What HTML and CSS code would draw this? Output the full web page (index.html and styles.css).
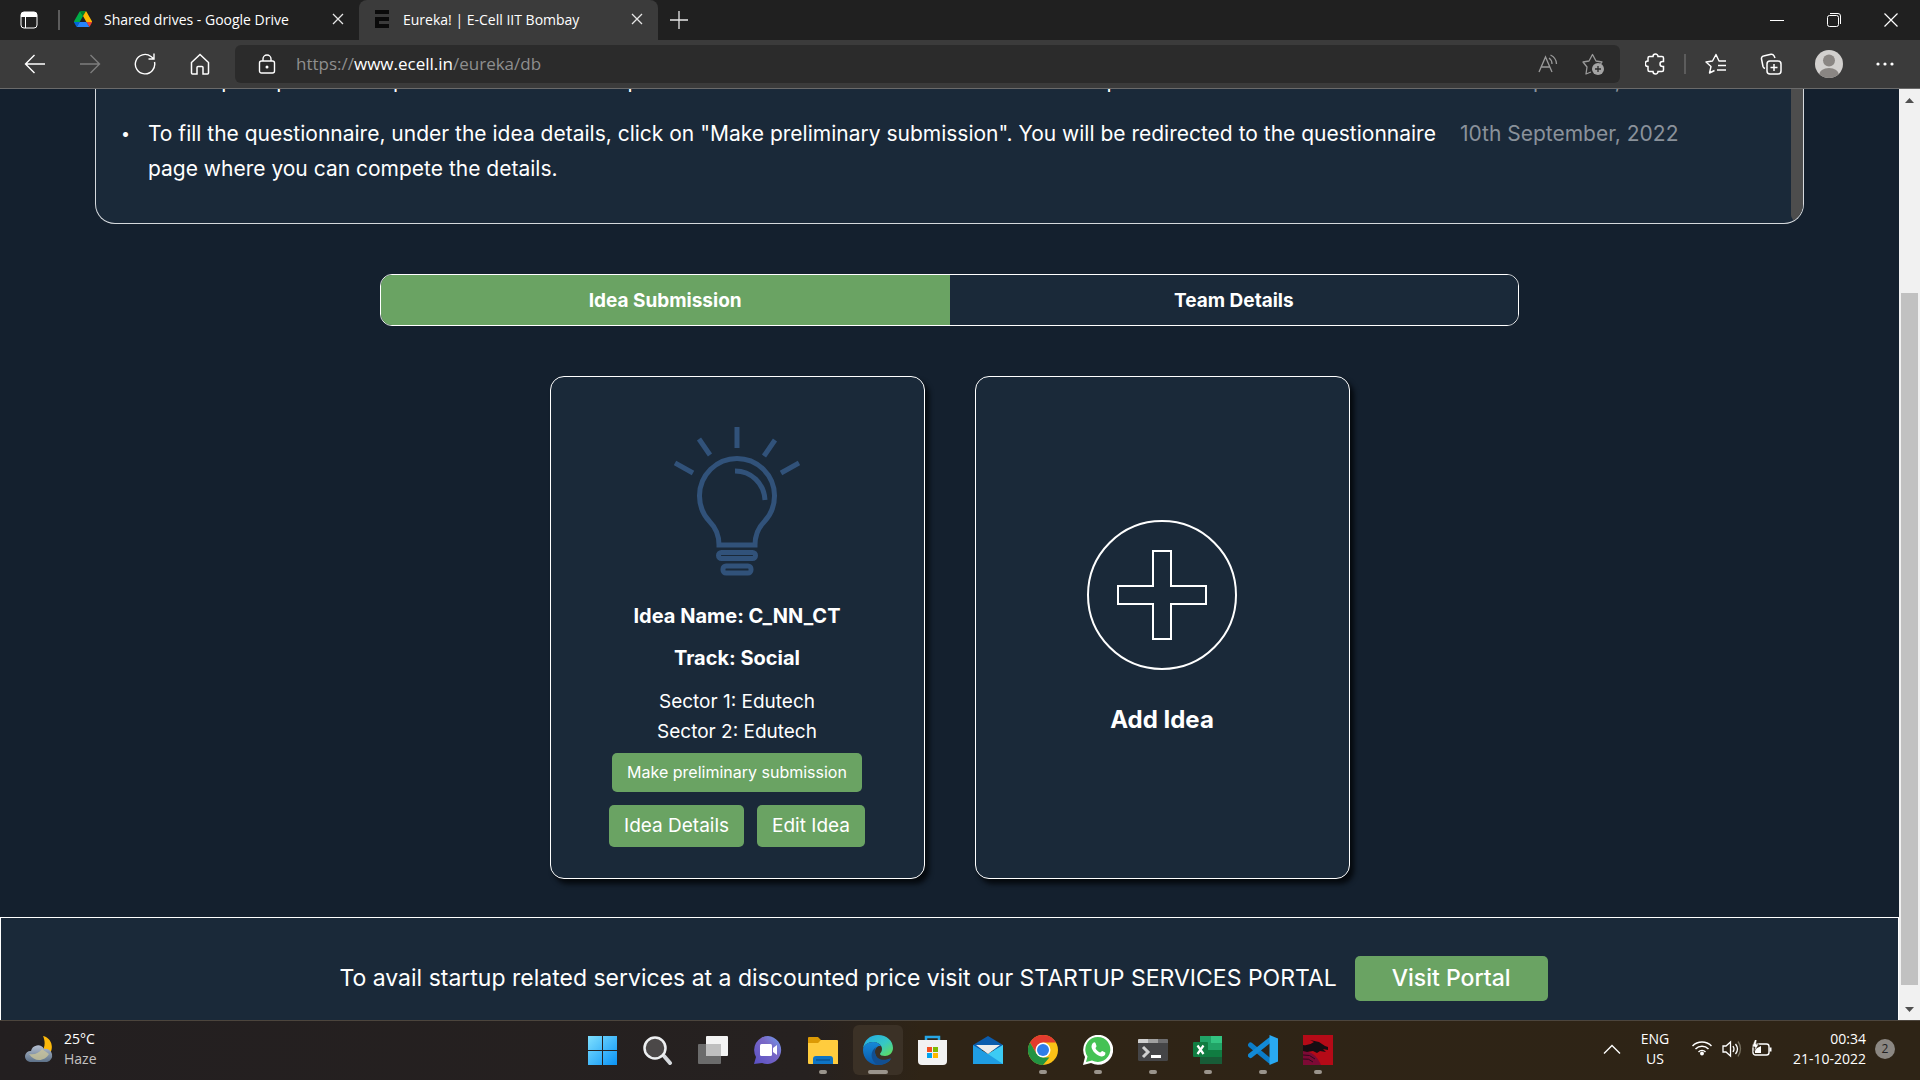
FILE: index.html
```html
<!DOCTYPE html>
<html lang="en">
<head>
<meta charset="utf-8">
<title>Eureka! | E-Cell IIT Bombay</title>
<link rel="stylesheet" href="styles.css">
</head>
<body>
<header class="browser">
  <div class="tabstrip">
    <button class="icon-btn workspaces" aria-label="Tab actions"><svg width="18" height="18" viewBox="0 0 18 18"><rect x="1" y="1" width="16" height="16" rx="3" fill="none" stroke="#fff" stroke-width="1"/><path d="M1 6V4a3 3 0 0 1 3-3h10a3 3 0 0 1 3 3v2z" fill="#fff"/><path d="M5.500 6v11" stroke="#fff"/></svg></button>
    <span class="divider"></span>
    <div class="tab">
      <svg width="18" height="18" viewBox="0 0 87 78"><path d="M6.600 66.850l3.850 6.650c.8 1.400 1.950 2.500 3.300 3.300L27.500 53H0c0 1.550.4 3.100 1.200 4.500z" fill="#0066da"/><path d="M43.650 25L29.900 1.200c-1.350.8-2.500 1.900-3.300 3.300l-25.400 44A9 9 0 0 0 0 53h27.500z" fill="#00ac47"/><path d="M73.550 76.800c1.350-.8 2.500-1.900 3.300-3.300l9.250-16c.8-1.400 1.200-2.950 1.200-4.500H59.800l5.850 11.500z" fill="#ea4335"/><path d="M43.650 25L57.400 1.200C56.050.4 54.500 0 52.900 0H34.400c-1.600 0-3.150.45-4.500 1.200z" fill="#00832d"/><path d="M59.800 53H27.500L13.750 76.800c1.350.8 2.900 1.200 4.500 1.200h50.800c1.600 0 3.150-.45 4.500-1.200z" fill="#2684fc"/><path d="M73.400 26.500l-12.700-22c-.8-1.400-1.950-2.500-3.300-3.300L43.650 25 59.800 53h27.450c0-1.550-.4-3.100-1.200-4.500z" fill="#ffba00"/></svg>
      <span class="tab-title">Shared drives - Google Drive</span>
      <button class="icon-btn" aria-label="Close tab"><svg width="12" height="12" viewBox="0 0 12 12"><path d="M1 1l10 10M11 1L1 11" stroke="#e6e6e6" stroke-width="1.300"/></svg></button>
    </div>
    <div class="tab active">
      <svg width="18" height="18" viewBox="0 0 18 18"><path d="M2 0h14v4H2zM2 7h14v4H6v3h10v4H2z" fill="#0a0a0a"/></svg>
      <span class="tab-title">Eureka! | E-Cell IIT Bombay</span>
      <button class="icon-btn" aria-label="Close tab"><svg width="12" height="12" viewBox="0 0 12 12"><path d="M1 1l10 10M11 1L1 11" stroke="#e6e6e6" stroke-width="1.300"/></svg></button>
    </div>
    <button class="icon-btn new-tab" aria-label="New tab"><svg width="18" height="18" viewBox="0 0 18 18"><path d="M9 0v18M0 9h18" stroke="#e6e6e6" stroke-width="1.300"/></svg></button>
    <div class="window-controls">
      <button class="icon-btn" aria-label="Minimize"><svg width="14" height="14" viewBox="0 0 14 14"><path d="M0 7.500h14" stroke="#fff"/></svg></button>
      <button class="icon-btn" aria-label="Restore"><svg width="14" height="14" viewBox="0 0 14 14" fill="none" stroke="#fff"><rect x=".5" y="2.500" width="11" height="11" rx="2"/><path d="M3 .5h8a2.500 2.500 0 0 1 2.500 2.500v8"/></svg></button>
      <button class="icon-btn" aria-label="Close"><svg width="14" height="14" viewBox="0 0 14 14"><path d="M.5.5l13 13M13.500.5l-13 13" stroke="#fff" stroke-width="1.200"/></svg></button>
    </div>
  </div>
  <div class="toolbar">
    <button class="icon-btn nav" aria-label="Back"><svg width="22" height="22" viewBox="0 0 22 22" fill="none" stroke="#fff" stroke-width="1.400"><path d="M21 11H1.500M10.500 2l-9 9 9 9"/></svg></button>
    <button class="icon-btn nav" aria-label="Forward"><svg width="22" height="22" viewBox="0 0 22 22" fill="none" stroke="#7d7d7d" stroke-width="1.400"><path d="M1 11h19.500M11.500 2l9 9-9 9"/></svg></button>
    <button class="icon-btn nav" aria-label="Refresh"><svg width="22" height="22" viewBox="0 0 22 22" fill="none" stroke="#fff" stroke-width="1.400"><path d="M20.500 9A9.700 9.700 0 1 1 17 3.500l2.500 2M20 .5v5.500h-5.500"/></svg></button>
    <button class="icon-btn nav" aria-label="Home"><svg width="22" height="22" viewBox="0 0 22 22" fill="none" stroke="#fff" stroke-width="1.500"><path d="M2.500 9.500L11 1.500l8.500 8V20a1 1 0 0 1-1 1H14v-6.500a1 1 0 0 0-1-1H9a1 1 0 0 0-1 1V21H3.500a1 1 0 0 1-1-1z"/></svg></button>
    <div class="address">
      <svg width="18" height="20" viewBox="0 0 18 20" fill="none" stroke="#fff" stroke-width="1.400"><rect x="1.500" y="7" width="15" height="12" rx="2"/><path d="M5 7V5a4 4 0 0 1 8 0v2"/><circle cx="9" cy="13" r=".8" fill="#fff"/></svg>
      <a class="url" href="#">https://<span class="host">www.ecell.in</span>/eureka/db</a>
      <button class="icon-btn" aria-label="Read aloud"><svg width="20" height="20" viewBox="0 0 20 20" fill="none" stroke="#9a9a9a" stroke-width="1.300"><path d="M1 18L7.500 3 14 18M3.500 13h8M11 4q3 2 3 6M12.500 1q6 3 6 9"/></svg></button>
      <button class="icon-btn" aria-label="Add to favorites"><svg width="22" height="22" viewBox="0 0 22 22"><path d="M9 19l-5 2 1-7-4-5 6-1 3.500-6.500L14 8l6 1-2 3" fill="none" stroke="#9a9a9a" stroke-width="1.300" stroke-linejoin="round"/><circle cx="16" cy="16" r="6" fill="#a4a4a4"/><path d="M16 13v6M13 16h6" stroke="#2b2b2b" stroke-width="1.300"/></svg></button>
    </div>
    <div class="tools">
      <button class="icon-btn" aria-label="Extensions"><svg width="20" height="22" viewBox="0 0 20 22" fill="none" stroke="#fff" stroke-width="1.500"><path d="M3 8V5a1.500 1.500 0 0 1 1.500-1.500H8a2.500 2.500 0 0 1 5 0h4A1.500 1.500 0 0 1 18.500 5v3.500h-1a2.500 2.500 0 0 0 0 5h1V17a1.500 1.500 0 0 1-1.500 1.500h-4a2.500 2.500 0 0 1-5 0H4.500A1.500 1.500 0 0 1 3 17v-3.500A2.700 2.700 0 0 1 3 8z"/></svg></button>
      <span class="divider"></span>
      <button class="icon-btn" aria-label="Favorites"><svg width="22" height="22" viewBox="0 0 22 22" fill="none" stroke="#fff" stroke-width="1.400" stroke-linejoin="round"><path d="M21 8h-7l-3-6.500L7.500 8 1 9l5 4.500L4.500 20l5-2.500M13 12.500h8M12 17h9"/></svg></button>
      <button class="icon-btn" aria-label="Collections"><svg width="22" height="22" viewBox="0 0 22 22" fill="none" stroke="#fff" stroke-width="1.500"><rect x="7" y="8" width="14" height="13" rx="3"/><path d="M14 11v7M10.500 14.500h7M5 15.500a3 3 0 0 1-2-2L1.500 6a2.500 2.500 0 0 1 2-3L11 1.200a3 3 0 0 1 3 1.600L15 5"/></svg></button>
      <button class="icon-btn" aria-label="Profile"><svg width="28" height="28" viewBox="0 0 28 28"><defs><clipPath id="avatar"><circle cx="14" cy="14" r="14"/></clipPath></defs><g clip-path="url(#avatar)"><path d="M0 0h28v28H0z" fill="#d2d0ce"/><circle cx="14" cy="10.500" r="6" fill="#8a8683"/><ellipse cx="14" cy="25" rx="10" ry="7" fill="#8a8683"/></g></svg></button>
      <button class="icon-btn" aria-label="Settings and more"><svg width="18" height="4" viewBox="0 0 18 4" fill="#fff"><circle cx="2" cy="2" r="1.600"/><circle cx="9" cy="2" r="1.600"/><circle cx="16" cy="2" r="1.600"/></svg></button>
    </div>
  </div>
</header>

<div class="viewport">
  <main class="page">
    <section class="notices">
      <ul class="notice-list">
        <li><p>To complete profile with photo and the idea info please click on the button that is shown at the top</p><time>10th September, 2022</time></li>
        <li><p>To fill the questionnaire, under the idea details, click on "Make preliminary submission". You will be redirected to the questionnaire page where you can compete the details.</p><time>10th September, 2022</time></li>
      </ul>
      <div class="notice-thumb"></div>
    </section>
    <nav class="switcher">
      <button class="switch selected">Idea Submission</button>
      <button class="switch">Team Details</button>
    </nav>
    <section class="cards">
      <article class="card idea">
        <svg class="bulb" width="126" height="150" viewBox="0 0 126 150" fill="none" stroke="#31527a" stroke-width="5"><path d="M63 0v21M25 12l11 16M101 13L90 29M1 36l18 10M125 36l-18 10"/><g transform="translate(0 2)"><path d="M45 116c0-9-3-17-9-23a37.500 37.500 0 1 1 54 0c-6 6-9 14-9 23z"/><path d="M61 42c16 0 29 12 30 29"/><rect x="44.500" y="123.500" width="37" height="6" rx="3"/><rect x="49" y="137" width="28" height="7" rx="3"/></g></svg>
        <h3>Idea Name: C_NN_CT</h3>
        <h3>Track: Social</h3>
        <p>Sector 1: Edutech</p>
        <p>Sector 2: Edutech</p>
        <button class="btn small">Make preliminary submission</button>
        <div class="btn-row"><button class="btn">Idea Details</button><button class="btn">Edit Idea</button></div>
      </article>
      <article class="card add">
        <svg width="150" height="150" viewBox="0 0 150 150" fill="none" stroke="#fff" stroke-width="2"><circle cx="75" cy="75" r="74"/><path d="M66 31h18v35h35v18H84v35H66V84H31V66h35z"/></svg>
        <h2>Add Idea</h2>
      </article>
    </section>
    <footer class="portal">
      <p>To avail startup related services at a discounted price visit our STARTUP SERVICES PORTAL</p>
      <button class="btn large">Visit Portal</button>
    </footer>
  </main>
  <div class="scrollbar">
    <svg width="9" height="5" viewBox="0 0 9 5"><path d="M0 5l4.500-5L9 5z" fill="#505050"/></svg>
    <div class="track"><div class="thumb"></div></div>
    <svg width="9" height="5" viewBox="0 0 9 5"><path d="M0 0l4.500 5L9 0z" fill="#505050"/></svg>
  </div>
</div>

<footer class="taskbar">
  <div class="weather">
    <svg width="30" height="28" viewBox="0 0 30 28"><defs><linearGradient id="cloud" x1="0" y1="0" x2="0" y2="1"><stop offset="0" stop-color="#b4bfd0"/><stop offset="1" stop-color="#5d7188"/></linearGradient></defs><path d="M19 1c9 2 12 13 5 20-5 5-14 5-19-1 12 3 19-8 14-19z" fill="#fdb90b"/><path d="M6 27a5.500 5.500 0 0 1 1-11 7 7 0 0 1 13-2 6.500 6.500 0 1 1 3 13z" fill="url(#cloud)"/><path d="M5 19c6 1 10-1 13-5l7 5c-4 7-14 9-20 0z" fill="#c9c39a" opacity=".8"/></svg>
    <div><div class="temp">25°C</div><div class="cond">Haze</div></div>
  </div>
  <div class="apps">
    <button class="app" aria-label="Start"><svg width="30" height="30" viewBox="0 0 30 30"><defs><linearGradient id="win" x1="0" y1="0" x2="1" y2="1"><stop offset="0" stop-color="#7fe0ff"/><stop offset="1" stop-color="#0a93f5"/></linearGradient></defs><path d="M0 1h14v14H0zM15 1h14v14H15zM0 16h14v14H0zM15 16h14v14H15z" fill="url(#win)"/></svg></button>
    <button class="app" aria-label="Search"><svg width="30" height="30" viewBox="0 0 30 30"><path d="M21 21l6 7" stroke="#d5d8dc" stroke-width="4" stroke-linecap="round"/><circle cx="12" cy="13" r="10.500" fill="#4b4848" stroke="#eef0f2" stroke-width="2.500"/></svg></button>
    <button class="app" aria-label="Task view"><svg width="30" height="30" viewBox="0 0 30 30"><rect x="8" y="1" width="22" height="20" rx="1" fill="#f3f3f3"/><rect y="9" width="23" height="20" rx="1" fill="#6b6b6b"/><path d="M8 9h15v12H8z" fill="#bfbfbf"/></svg></button>
    <button class="app" aria-label="Chat"><svg width="30" height="30" viewBox="0 0 30 30"><defs><linearGradient id="chat" x1="0" y1="1" x2="1" y2="0"><stop offset="0" stop-color="#5950c4"/><stop offset=".6" stop-color="#7a68c6"/><stop offset="1" stop-color="#6fa0f0"/></linearGradient></defs><path d="M15 1a14 14 0 1 1-6 27l-8 1 2-7A14 14 0 0 1 15 1z" fill="url(#chat)"/><rect x="7" y="9" width="12" height="12" rx="1.500" fill="#fff"/><path d="M20 13l4-3v10l-4-3z" fill="#fff"/></svg></button>
    <button class="app running" aria-label="File Explorer"><svg width="30" height="30" viewBox="0 0 30 30"><path d="M0 3a1 1 0 0 1 1-1h9l3 3h4v5H0z" fill="#dc9a05"/><path d="M0 8h10l3-3h16a1 1 0 0 1 1 1v23H1a1 1 0 0 1-1-1z" fill="#ffcc3e"/><path d="M5 29v-5a3 3 0 0 1 3-3h14a3 3 0 0 1 3 3v5z" fill="#0e74c4"/><path d="M8 25h14" stroke="#06457c"/></svg></button>
    <button class="app running current" aria-label="Microsoft Edge"><svg width="30" height="30" viewBox="0 0 30 30"><defs><linearGradient id="edgeTop" x1="0" y1="0" x2="1" y2="1"><stop offset="0" stop-color="#21a8e8"/><stop offset=".55" stop-color="#36c8c4"/><stop offset="1" stop-color="#66df4e"/></linearGradient><linearGradient id="edgeBody" x1="0" y1="0" x2="0" y2="1"><stop offset="0" stop-color="#1589d8"/><stop offset="1" stop-color="#0b58a8"/></linearGradient></defs><path d="M0 14C1 5 7 0 15 0c9 0 15 6 15 13 0 5-4 8-8 8-3 0-5-1-5-2s2-2 2-5c0-4-4-7-9-7-5 0-9 3-10 7z" fill="url(#edgeTop)"/><path d="M0 15c0-5 5-8 10-8 4 0 7 2 8.500 4.500C15 10 12 13 12 17c0 5 4 9 9 9 3 0 5-1 7-2-3 4-8 6-13 6C6 30 0 23 0 15z" fill="url(#edgeBody)"/><path d="M13 12c-4 3-5 7-4 11 1 3 3 6 6 7 5 0 10-2 13-7-8 4-16 1-16-6 0-2 0-4 1-5z" fill="#124f91"/></svg></button>
    <button class="app" aria-label="Microsoft Store"><svg width="30" height="30" viewBox="0 0 30 30"><path d="M8 7V2h13v5" fill="none" stroke="#27a6e6" stroke-width="2.500"/><path d="M0 5h29v21a4 4 0 0 1-4 4H4a4 4 0 0 1-4-4z" fill="#f2f2f2"/><path d="M9 12h5v5H9z" fill="#f25022"/><path d="M15 12h5v5h-5z" fill="#7fba00"/><path d="M9 18h5v5H9z" fill="#00a4ef"/><path d="M15 18h5v5h-5z" fill="#ffb900"/></svg></button>
    <button class="app" aria-label="Mail"><svg width="30" height="30" viewBox="0 0 30 30"><path d="M0 10l15-9 15 9v5H0z" fill="#0b5cad"/><path d="M0 10l15 9 15-9v19H0z" fill="#1f9de3"/><path d="M15 19l15-9v19z" fill="#3ccbf4"/><path d="M3 10h24L15 19z" fill="#ececec"/></svg></button>
    <button class="app running" aria-label="Google Chrome"><svg width="30" height="30" viewBox="0 0 30 30"><circle cx="15" cy="15" r="15" fill="#fbc116"/><path d="M2 7.500A15 15 0 0 1 28 7.500H15L8.500 18.700z" fill="#e33b2e"/><path d="M2 7.500l6.500 11.200L15 22.500h6.400L15 30A15 15 0 0 1 2 7.500z" fill="#229342"/><circle cx="15" cy="15" r="7.500" fill="#fff"/><circle cx="15" cy="15" r="6" fill="#2f7de9"/></svg></button>
    <button class="app running" aria-label="WhatsApp"><svg width="30" height="30" viewBox="0 0 30 30"><path d="M0 30l2-8A15 15 0 1 1 8 28z" fill="#fff"/><path d="M3 27l1.500-5.500A12.500 12.500 0 1 1 9 25.500z" fill="#45c254"/><path d="M10 8c1-1 2-1 2.500 0l1 3c0 1-1 1.500-1 2.200 1 2 2.500 3.300 4.500 4.300 1 0 1.500-1.500 2.300-1.500l3 1.500c.5 3-2 4-4 4C14 21 9 16 8.500 12c0-2 .5-3 1.500-4z" fill="#fff"/></svg></button>
    <button class="app running" aria-label="Terminal"><svg width="30" height="30" viewBox="0 0 30 30"><rect y="4" width="30" height="22" rx="1.500" fill="#454547"/><path d="M0 8V5a1 1 0 0 1 1-1h9v4z" fill="#cfcfcf"/><path d="M10 4h10v4H10z" fill="#a0a0a0"/><path d="M20 4h9a1 1 0 0 1 1 1v3H20z" fill="#6d6d6f"/><path d="M5 12l5 5-5 5" fill="none" stroke="#d0d0d0" stroke-width="3"/><path d="M13 21.500h10" stroke="#fff" stroke-width="3"/></svg></button>
    <button class="app running" aria-label="Excel"><svg width="30" height="30" viewBox="0 0 30 30"><path d="M7 1h22v28H7z" fill="#185c37"/><path d="M7 1h11v14H7z" fill="#21a366"/><path d="M18 1h11v7H18z" fill="#33c481"/><path d="M18 8h11v7H18z" fill="#21a366"/><path d="M7 15h11v7H7z" fill="#107c41"/><path d="M18 15h11v7H18z" fill="#107c41"/><rect y="7" width="15" height="15" rx="1" fill="#107c41"/><path d="M4.500 10.500l6 8.500M10.500 10.500l-6 8.500" stroke="#fff" stroke-width="2.200"/></svg></button>
    <button class="app running" aria-label="Visual Studio Code"><svg width="30" height="30" viewBox="0 0 30 30"><path d="M2.500 10L22 26" stroke="#0b7cc8" stroke-width="5" stroke-linecap="round"/><path d="M2.500 20.500L22 5" stroke="#128ad6" stroke-width="5" stroke-linecap="round"/><path d="M21.500 0L30 3.500v23L21.500 30z" fill="#29a9f2"/></svg></button>
    <button class="app running" aria-label="Red dragon"><svg width="30" height="30" viewBox="0 0 30 30"><path d="M0 0h30v30H0z" fill="#b50a17"/><path d="M0 16q12 0 18 14H0z" fill="#7d0a35"/><path d="M0 10q6 1 11-3l-4-2 9 2 6 4 3 1v3l-5-1 3 3-6-1-3 2-4-2-6 1-4-1z" fill="#160d12"/><path d="M0 20q7-1 12 4M0 24q6-1 10 3" stroke="#2c0a1c" fill="none"/></svg></button>
  </div>
  <div class="tray">
    <svg width="18" height="10" viewBox="0 0 18 10"><path d="M1 9.500l8-8 8 8" fill="none" stroke="#fff" stroke-width="1.400"/></svg>
    <div class="lang">ENG<br>US</div>
    <div class="status">
      <svg width="20" height="16" viewBox="0 0 20 16" fill="none" stroke="#fff" stroke-width="1.500"><path d="M.5 6a13.500 13.500 0 0 1 19 0M3.500 9a9.200 9.200 0 0 1 13 0M6.500 12a5 5 0 0 1 7 0"/><circle cx="10" cy="13.500" r="1.200" fill="#fff"/></svg>
      <svg width="20" height="18" viewBox="0 0 20 18" fill="none" stroke="#fff" stroke-width="1.300"><path d="M1 6h3l4.500-4v14L4 12H1z"/><path d="M11 6q2 3 0 6M13.500 4q4 5 0 10"/><path d="M16 1.500q5 7 0 15" stroke="#76705f"/></svg>
      <svg width="20" height="18" viewBox="0 0 20 18"><rect x="1" y="4" width="16" height="11" rx="2.500" fill="none" stroke="#fff" stroke-width="1.400"/><path d="M17.500 7.500h2v4h-2zM3 13V9l6-3v7z" fill="#fff"/><path d="M3-1L0 7h3l-1 5 5-8H4l1-4z" fill="#fff" stroke="#2e2416" stroke-width=".6"/></svg>
    </div>
    <div class="clock">00:34<br>21-10-2022</div>
    <span class="count">2</span>
  </div>
</footer>
</body>
</html>
```
FILE: styles.css
```css
* { box-sizing: border-box; }
body { margin: 0; height: 100vh; display: flex; flex-direction: column; overflow: hidden; background: #14202e; color: #fff; font-family: Inter, "Noto Sans", sans-serif; }
button { font: inherit; color: inherit; border: 0; cursor: pointer; }
svg { display: block; flex: none; }
h2, h3, p, ul { margin: 0; padding: 0; }

/* Browser chrome */
.browser, .taskbar { font-family: "Open Sans", "Noto Sans", sans-serif; flex: none; }
.icon-btn { display: flex; align-items: center; justify-content: center; padding: 0; background: none; }
.divider { width: 2px; height: 20px; background: #5c5c5c; }
.tabstrip { display: flex; align-items: center; height: 40px; background: #202020; }
.workspaces { width: 58px; }
.tab { display: flex; align-items: center; gap: 12px; height: 40px; padding: 0 15px 2px 14px; width: 299px; font-size: 14px; }
.tab.active { background: #3b3b3b; border-radius: 8px 8px 0 0; }
.tab-title { flex: 1; white-space: nowrap; }
.new-tab { width: 42px; }
.window-controls { display: flex; margin: 0 1px 0 auto; }
.window-controls .icon-btn { width: 57px; height: 40px; }
.toolbar { display: flex; align-items: center; height: 49px; background: #3b3b3b; border-bottom: 1px solid #6a6a6a; padding: 0 26px 0 7px; }
.nav { width: 55px; height: 40px; }
.address { display: flex; flex: 1; align-items: center; height: 38px; margin-left: 8px; padding: 0 16px 0 23px; border-radius: 6px; background: #2b2b2b; gap: 24px; }
.url { flex: 1; padding-bottom: 2px; margin-left: -4px; color: #8f8f8f; font-size: 17px; text-decoration: none; }
.host { color: #fff; }
.tools { display: flex; align-items: center; gap: 33px; padding-left: 25px; }
.tools .divider { margin: 0 -14px; }

/* Page */
.viewport { display: flex; flex: 1; min-height: 0; }
.page { flex: 1; min-width: 0; display: flex; flex-direction: column; overflow: hidden; }
.notices { flex: none; display: flex; justify-content: space-between; width: 90%; height: 135px; margin: 0 auto; background: #1a2939; border: 1px solid #d5d9dd; border-top: 0; border-radius: 0 0 20px 20px; overflow: hidden; }
.notice-list { display: flex; flex-direction: column; justify-content: flex-end; gap: 18px; list-style: none; padding: 0 0 37px 25px; font-size: 21px; line-height: 35px; }
.notice-list li { display: flex; }
.notice-list li::before { content: "•"; width: 27px; font-size: 16px; }
.notice-list p { width: 1290px; margin-right: 22px; }
.notice-list time { color: #8a929b; white-space: nowrap; }
.notice-thumb { width: 12px; height: 132px; background: #4d4d4d; border-radius: 0 0 8px 8px; }
.switcher { flex: none; display: flex; width: 60%; height: 52px; margin: 50px auto 0; border: 1px solid #fff; border-radius: 12px; overflow: hidden; }
.switch { flex: 1; background: #1a2939; font-size: 19px; font-weight: 700; }
.switch.selected { background: #6aa363; }
.cards { flex: none; display: flex; justify-content: center; gap: 50px; margin-top: 50px; }
.card { display: flex; flex-direction: column; align-items: center; width: 375px; height: 503px; background: #1a2939; border: 1px solid #fff; border-radius: 14px; box-shadow: 4px 5px 5px #05090e; }
.idea { padding-top: 50px; }
.idea h3 { font-size: 20px; line-height: 27px; margin-bottom: 15px; }
.bulb { margin-bottom: 26px; }
.idea p { font-size: 19px; line-height: 30px; }
.btn { background: #6aa363; border-radius: 5px; padding: 0 15px 2px; height: 42px; font-size: 19px; white-space: nowrap; }
.btn.small { height: 39px; font-size: 16px; margin: 6px 0 13px; }
.btn.large { height: 45px; padding: 0 37px; font-size: 23px; font-weight: 500; }
.btn-row { display: flex; gap: 13px; }
.add { justify-content: center; gap: 31px; padding-top: 3px; }
.add h2 { font-size: 24px; line-height: 38px; }
.portal { flex: 1; min-height: 103px; display: flex; align-items: flex-start; justify-content: center; gap: 18px; margin-top: 38px; padding: 38px 12px 0 0; background: #1a2939; border: 1px solid #fff; border-bottom: 0; font-size: 23px; line-height: 45px; }

.scrollbar { display: flex; flex-direction: column; align-items: center; width: 21px; padding: 9px 0 8px; background: #f1f1f1; }
.track { flex: 1; display: flex; flex-direction: column; justify-content: flex-end; width: 17px; padding: 6px 0 22px; }
.thumb { height: 79%; background: #c1c1c1; }

/* Taskbar */
.taskbar { display: grid; grid-template-columns: 1fr auto 1fr; align-items: center; height: 60px; padding-bottom: 1px; border-top: 1px solid #4c453d; background: linear-gradient(90deg, #231f20 0, #262120 42%, #2f2416 48%, #2e2416 100%); font-size: 14px; line-height: 20px; }
.weather { display: flex; align-items: center; gap: 10px; padding: 0 0 2px 24px; }
.cond { color: #c4c2c1; }
.apps { display: flex; gap: 5px; }
.app { position: relative; display: flex; align-items: center; justify-content: center; width: 50px; height: 50px; padding: 0; background: none; border-radius: 6px; }
.app.current { background: #3b3126; }
.app.running::after { content: ""; position: absolute; bottom: 1px; width: 8px; height: 4px; border-radius: 2px; background: #9a948c; }
.app.current::after { width: 20px; }
.tray { display: flex; align-items: center; justify-content: flex-end; padding: 0 25px 2px 0; }
.lang { width: 68px; text-align: center; }
.status { display: flex; gap: 10px; margin-left: 3px; }
.clock { width: 94px; text-align: right; white-space: nowrap; }
.count { width: 20px; height: 20px; margin-left: 9px; border-radius: 50%; background: #8b8782; color: #222; font-size: 12px; text-align: center; }
```
